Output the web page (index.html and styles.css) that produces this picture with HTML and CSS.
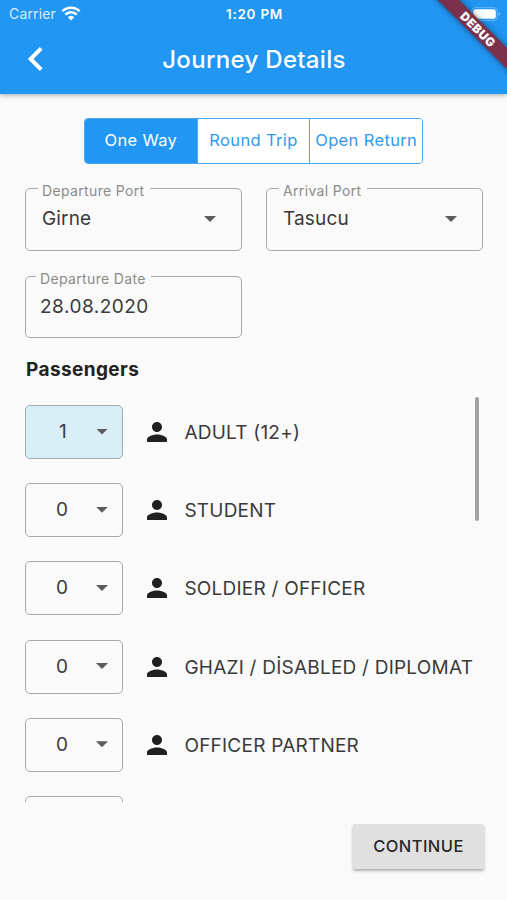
FILE: index.html
```html
<!DOCTYPE html>
<html lang="en">
<head>
<meta charset="utf-8">
<title>Journey Details</title>
<link rel="stylesheet" href="styles.css">
</head>
<body>
<header class="appbar">
  <div class="status">
    <div class="network">
      <span class="carrier">Carrier</span>
      <svg class="wifi" width="20" height="15" viewBox="0 0 20 15" fill="none" stroke="#fff" stroke-width="2.5"><path d="M1.3 5.2a12.6 12.6 0 0 1 17.4 0M4.3 8.6a8 8 0 0 1 11.4 0"/><path d="M6.8 11.2a4.8 4.8 0 0 1 6.4 0L10 14.5z" fill="#fff" stroke="none"/></svg>
    </div>
    <span class="time">1:20 PM</span>
    <svg class="battery" width="30" height="14" viewBox="0 0 30 14"><rect x=".6" y=".6" width="25.8" height="12.8" rx="3.8" fill="none" stroke="#fff" stroke-opacity=".3"/><rect x="2.2" y="2.2" width="22.6" height="9.6" rx="2.2" fill="#fff"/><path d="M27.7 4.8q3 2.2 0 4.4z" fill="#fff" fill-opacity=".4"/></svg>
  </div>
  <div class="titlebar">
    <svg class="back" width="16" height="26" viewBox="0 0 16 26" fill="none" stroke="#fff" stroke-width="4"><path d="M14.2 2.4 3.6 13l10.6 10.6"/></svg>
    <h1>Journey Details</h1>
  </div>
</header>
<div class="banner"><span>DEBUG</span></div>

<main>
  <div class="tabs">
    <button class="tab active">One Way</button>
    <button class="tab">Round Trip</button>
    <button class="tab">Open Return</button>
  </div>
  <div class="fields">
    <div class="field"><span class="label">Departure Port</span><span class="value">Girne</span><i class="caret"></i></div>
    <div class="field"><span class="label">Arrival Port</span><span class="value">Tasucu</span><i class="caret"></i></div>
    <div class="field date"><span class="label">Departure Date</span><span class="value">28.08.2020</span></div>
  </div>
  <h2>Passengers</h2>
  <div class="list">
    <div class="row"><div class="count selected"><span>1</span><i class="caret"></i></div><svg class="person" viewBox="4 4 16 16"><path d="M12 12c2.21 0 4-1.79 4-4s-1.79-4-4-4-4 1.79-4 4 1.79 4 4 4zm0 2c-2.67 0-8 1.34-8 4v2h16v-2c0-2.66-5.33-4-8-4z"/></svg><span class="name">ADULT (12+)</span></div>
    <div class="row"><div class="count"><span>0</span><i class="caret"></i></div><svg class="person" viewBox="4 4 16 16"><path d="M12 12c2.21 0 4-1.79 4-4s-1.79-4-4-4-4 1.79-4 4 1.79 4 4 4zm0 2c-2.67 0-8 1.34-8 4v2h16v-2c0-2.66-5.33-4-8-4z"/></svg><span class="name">STUDENT</span></div>
    <div class="row"><div class="count"><span>0</span><i class="caret"></i></div><svg class="person" viewBox="4 4 16 16"><path d="M12 12c2.21 0 4-1.79 4-4s-1.79-4-4-4-4 1.79-4 4 1.79 4 4 4zm0 2c-2.67 0-8 1.34-8 4v2h16v-2c0-2.66-5.33-4-8-4z"/></svg><span class="name">SOLDIER / OFFICER</span></div>
    <div class="row"><div class="count"><span>0</span><i class="caret"></i></div><svg class="person" viewBox="4 4 16 16"><path d="M12 12c2.21 0 4-1.79 4-4s-1.79-4-4-4-4 1.79-4 4 1.79 4 4 4zm0 2c-2.67 0-8 1.34-8 4v2h16v-2c0-2.66-5.33-4-8-4z"/></svg><span class="name">GHAZI / DİSABLED / DIPLOMAT</span></div>
    <div class="row"><div class="count"><span>0</span><i class="caret"></i></div><svg class="person" viewBox="4 4 16 16"><path d="M12 12c2.21 0 4-1.79 4-4s-1.79-4-4-4-4 1.79-4 4 1.79 4 4 4zm0 2c-2.67 0-8 1.34-8 4v2h16v-2c0-2.66-5.33-4-8-4z"/></svg><span class="name">OFFICER PARTNER</span></div>
    <div class="row"><div class="count"></div></div>
    <div class="scrollbar"></div>
  </div>
  <button class="continue">CONTINUE</button>
</main>
</body>
</html>
```
FILE: styles.css
```css
* { box-sizing: border-box; }
body {
  margin: 0;
  width: 507px;
  height: 900px;
  position: relative;
  overflow: hidden;
  background: #fafafa;
  color: #3a3a3a;
  font-family: Inter, "Liberation Sans", sans-serif;
  white-space: nowrap;
}
button { font: inherit; border: 0; padding: 0; }
.appbar {
  height: 94px;
  background: #2196f3;
  color: #fff;
  box-shadow: 0 1px 5px rgba(0, 0, 0, .35);
}
.status {
  height: 27px;
  display: grid;
  grid-template-columns: 1fr auto 1fr;
  align-items: center;
  padding: 0 6px 0 9px;
}
.network { display: flex; align-items: center; gap: 5px; }
.carrier { font-size: 14px; letter-spacing: .15px; color: #d9edff; }
.time { font-size: 13.5px; font-weight: 600; letter-spacing: .75px; margin-right: 1px; }
.battery { justify-self: end; }
.titlebar {
  height: 64px;
  display: grid;
  grid-template-columns: 16px 1fr 16px;
  align-items: center;
  padding: 0 27px;
}
h1 {
  margin: 0 0 0 1px;
  text-align: center;
  font-size: 24px;
  font-weight: 500;
  letter-spacing: .3px;
}
.banner {
  position: absolute;
  left: 418px;
  top: 22px;
  width: 120px;
  height: 15px;
  background: #7b304b;
  box-shadow: 0 0 6px rgba(0, 0, 0, .5);
  color: #fff;
  transform: rotate(45deg);
  font-size: 12px;
  line-height: 15px;
  font-weight: 900;
  letter-spacing: .5px;
  text-align: center;
}
main { padding: 24px 24px 0 25px; display: flex; flex-direction: column; }
.tabs {
  width: 339px;
  height: 46px;
  margin-left: 59px;
  display: flex;
  border: 1px solid #4aa8f2;
  border-radius: 4px;
  overflow: hidden;
}
.tab {
  flex: 1;
  padding-bottom: 2px;
  background: #fff;
  color: #2f99ee;
  font-size: 16.5px;
  letter-spacing: .35px;
}
.tab + .tab { border-left: 1px solid #4aa8f2; }
.tab.active { background: #2196f3; color: #fff; }
.fields {
  margin-top: 24px;
  display: grid;
  grid-template-columns: 217px 217px;
  grid-template-rows: 63px 62px;
  gap: 25px 24px;
}
.field {
  position: relative;
  display: flex;
  justify-content: space-between;
  border: 1px solid #a8a8a8;
  border-radius: 5px;
  padding: 0 25px 0 16px;
}
.label {
  position: absolute;
  left: 12px;
  top: -7px;
  padding: 0 5px 0 4px;
  background: #fafafa;
  color: #8b8b8b;
  font-size: 14px;
  line-height: 18px;
  letter-spacing: .35px;
}
.value { font-size: 19px; line-height: 60px; letter-spacing: .15px; }
.date { padding-left: 14px; }
.date .label { left: 10px; }
.date .value { letter-spacing: .5px; }
.caret {
  width: 12px;
  height: 6px;
  background: #5c5c5c;
  clip-path: polygon(0 0, 100% 0, 50% 100%);
}
.field .caret { margin-top: 27px; }
h2 {
  margin: 18px 0 0 1px;
  font-size: 19px;
  line-height: 28px;
  font-weight: 700;
  color: #222;
  letter-spacing: .4px;
}
.list {
  position: relative;
  height: 418px;
  overflow: hidden;
  padding-top: 21px;
}
.row { height: 78.2px; display: flex; align-items: flex-start; }
.count {
  width: 98px;
  height: 54px;
  border: 1px solid #a8a8a8;
  border-radius: 5px;
  display: flex;
  justify-content: space-between;
  align-items: center;
  padding: 0 14px 0 30px;
  font-size: 19px;
  line-height: 52px;
}
.count.selected { background: #daeef7; border-color: #9cafb3; padding-left: 33px; }
.count .caret { margin-bottom: 1px; }
.person { width: 20px; height: 20px; margin: 17px 17.4px 0 24px; fill: #202020; }
.name { font-size: 19px; line-height: 56px; letter-spacing: .23px; }
.scrollbar {
  position: absolute;
  right: 4px;
  top: 13px;
  width: 4px;
  height: 124px;
  border-radius: 2px;
  background: #a2a2a2;
}
.continue {
  align-self: flex-end;
  width: 131px;
  height: 45px;
  margin: 22px -1px 0 0;
  padding-bottom: 2px;
  border-radius: 2px;
  background: #e0e0e0;
  color: #292929;
  font-size: 16.5px;
  font-weight: 500;
  letter-spacing: .45px;
  box-shadow: 0 2px 3px rgba(0, 0, 0, .3);
}
```
